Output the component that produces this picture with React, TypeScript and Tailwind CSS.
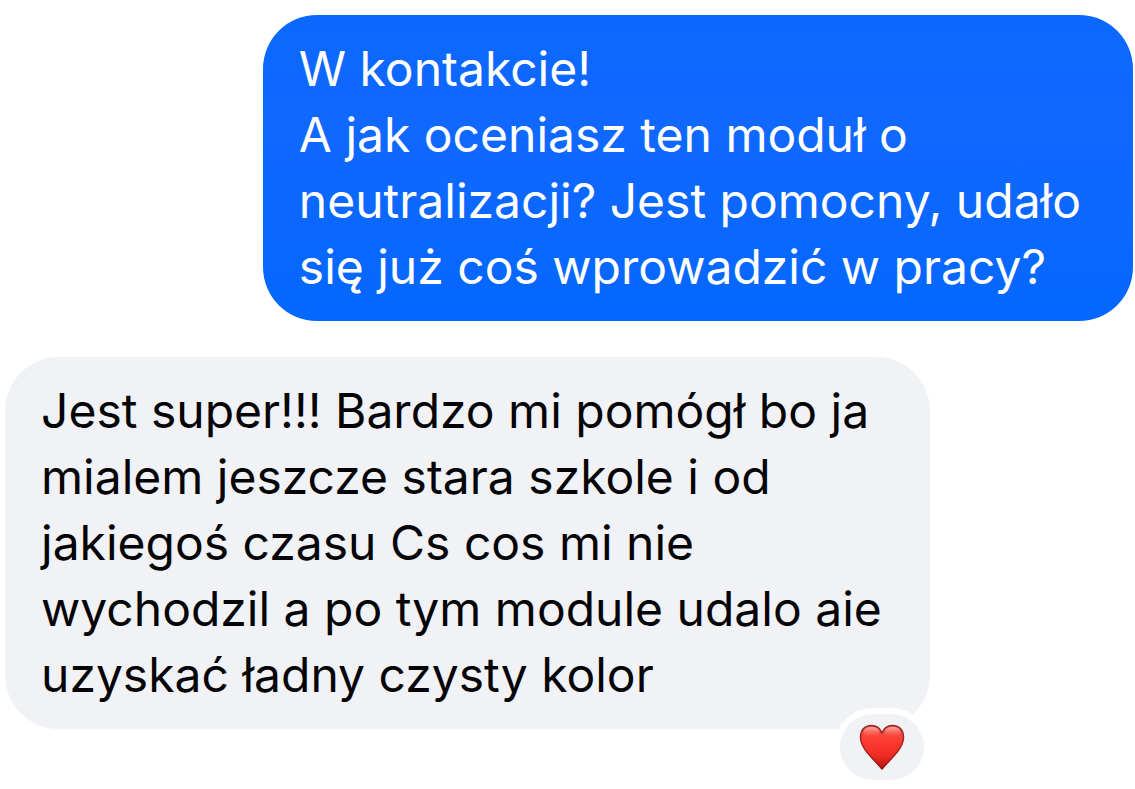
import type { ReactNode } from "react";

interface MessageProps {
  side: "sent" | "received";
  children: ReactNode;
  reaction?: ReactNode;
}

const bubbleStyles = {
  sent: "self-end bg-linear-to-b from-[#0b68ff] via-[#1068ff] via-35% to-[#0467ff] pr-[52px] text-white",
  received: "self-start bg-[#f1f2f6] pr-12 text-[#050507]",
};

function Message({ side, children, reaction }: MessageProps) {
  return (
    <div className={`relative rounded-[54px] py-[21px] pl-9 text-5xl leading-[66px] ${bubbleStyles[side]}`}>
      {children}
      {reaction && (
        <button
          type="button"
          aria-label="Reactions"
          className="absolute right-0 -bottom-[57px] flex h-[78px] w-24 items-center justify-center rounded-full border-[6px] border-white bg-[#f1f2f6]"
        >
          {reaction}
        </button>
      )}
    </div>
  );
}

function HeartIcon() {
  return (
    <svg viewBox="0 0 46 46" className="size-[46px]" aria-hidden="true">
      <defs>
        <linearGradient id="heart-fill" x1="0" y1="0" x2="0" y2="1">
          <stop offset="0" stopColor="#f4574c" />
          <stop offset="0.35" stopColor="#fb3c32" />
          <stop offset="0.7" stopColor="#ee2b22" />
          <stop offset="1" stopColor="#b3160f" />
        </linearGradient>
        <linearGradient id="heart-edge" x1="0" y1="0" x2="0" y2="1">
          <stop offset="0" stopColor="#8c2a2a" />
          <stop offset="0.5" stopColor="#b3201b" />
          <stop offset="1" stopColor="#8f1712" />
        </linearGradient>
        <linearGradient id="heart-shine" x1="0" y1="0" x2="0" y2="1">
          <stop offset="0" stopColor="#ffc2b4" stopOpacity="0.8" />
          <stop offset="1" stopColor="#ff6a5c" stopOpacity="0" />
        </linearGradient>
      </defs>
      <path
        d="M23 9C21 4 17.500 1.500 12.500 1.500C5.500 1.500 1.500 6.500 1.500 13C1.500 25 14 34 23 45C32 34 44.500 25 44.500 13C44.500 6.500 40.500 1.500 33.500 1.500C28.500 1.500 25 4 23 9Z"
        fill="url(#heart-fill)"
        stroke="url(#heart-edge)"
        strokeWidth="1.500"
        strokeLinejoin="round"
      />
      <ellipse cx="12.500" cy="8" rx="8" ry="5" fill="url(#heart-shine)" />
      <ellipse cx="33.500" cy="8" rx="8" ry="5" fill="url(#heart-shine)" />
    </svg>
  );
}

export default function App() {
  return (
    <main className="flex min-h-screen flex-col gap-9 bg-white pt-[15px] pr-0.5 pb-[60px] pl-[5px] font-['Inter',sans-serif]">
      <Message side="sent">
        <p>W kontakcie!</p>
        <p>
          A jak oceniasz ten moduł o<br />
          neutralizacji? Jest pomocny, udało
          <br />
          się już coś wprowadzić w pracy?
        </p>
      </Message>
      <Message side="received" reaction={<HeartIcon />}>
        <p>
          Jest super!!! Bardzo mi pomógł bo ja
          <br />
          mialem jeszcze stara szkole i od
          <br />
          jakiegoś czasu Cs cos mi nie
          <br />
          wychodzil a po tym module udalo aie
          <br />
          uzyskać ładny czysty kolor
        </p>
      </Message>
    </main>
  );
}
